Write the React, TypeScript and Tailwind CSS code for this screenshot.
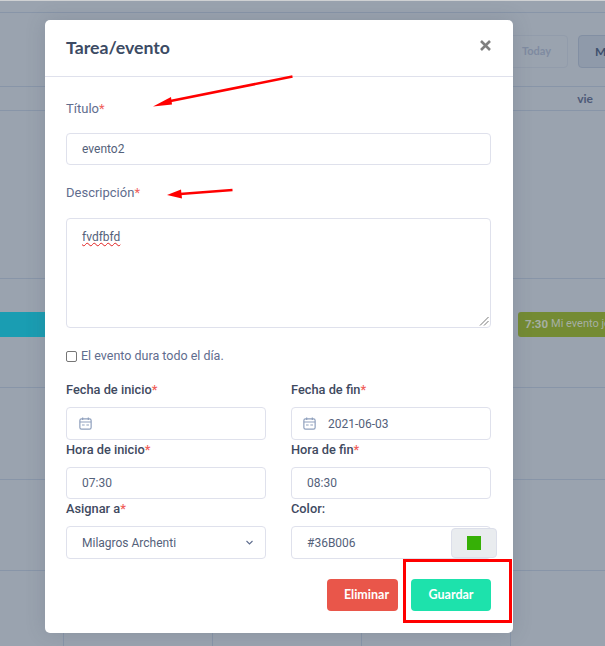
const inputBase = "h-[32px] w-full rounded border border-[#dfe1ec] bg-white flex items-center text-[12px] text-[#54617a]";

function Req({ children }: { children: string }) {
  return (
    <label className="block pt-px h-[18px] text-[12.8px] leading-[18px] font-medium text-[#3f4a5f]">
      {children}
      <span className="text-[#f0605a]">*</span>
    </label>
  );
}

function Calendar() {
  return (
    <svg width="13" height="13" viewBox="0 0 12 12" fill="none" stroke="#8fa0bd" strokeWidth="1.1">
      <rect x="0.8" y="1.8" width="10.4" height="9.4" rx="1.5" />
      <path d="M0.8 4.6h10.4M3.4 0.4v2.4M8.6 0.4v2.4M2.8 7.4h2.4M6.8 7.4h2.4" />
    </svg>
  );
}

function Row({ h, children }: { h: string; children?: React.ReactNode }) {
  return <div className={`${h} border-b border-[#8895a8] relative`}>{children}</div>;
}

function Background() {
  return (
    <div className="h-[646px] w-[605px] overflow-hidden bg-[#9aa3af]">
      <div className="h-px bg-[#cfd1d3]" />
      <Row h="h-[12px]" />
      <div className="h-[74px] border-b border-[#8895a8] flex justify-end pt-[22px] gap-[10px] -mr-[40px]">
        <div className="h-[33px] w-[64px] rounded border border-[#929cab] flex items-center justify-end pr-[16px] text-[11px] font-bold text-[#7f8ba1] font-['Lato',sans-serif]">
          Today
        </div>
        <div className="h-[33px] w-[67px] rounded border border-[#828fa3] bg-[#8f9aaa] pl-[16px] flex items-center text-[12px] font-bold text-[#3e506e] font-['Lato',sans-serif]">
          M
        </div>
      </div>
      <div className="h-[24px] border-b border-[#8895a8] flex justify-end pr-[12px] items-center text-[12px] font-bold text-[#4d5a78] font-['Lato',sans-serif]">
        vie
      </div>
      <Row h="h-[168px]" />
      <div className="h-[109px] border-b border-[#8895a8] pt-[33px] flex">
        <div className="h-[25px] w-[300px] bg-[#1a9db2]" />
        <div className="h-[25px] flex-1 ml-[218px] rounded-l-[3px] bg-[#748b33] pl-[7px] flex items-center gap-[3px] whitespace-nowrap overflow-hidden font-['Roboto',sans-serif] text-[#a6afa4]">
          <span className="text-[11.5px] font-bold">7:30</span>
          <span className="text-[11px]">Mi evento je</span>
        </div>
      </div>
      <Row h="h-[92px]" />
      <Row h="h-[91px]" />
      <div className="flex h-[76px]">
        <div className="w-[64px] border-r border-[#8895a8]" />
        <div className="w-[149px] border-r border-[#8895a8]" />
        <div className="w-[149px] border-r border-[#8895a8]" />
        <div className="w-[149px] border-r border-[#8895a8]" />
      </div>
    </div>
  );
}

function Modal() {
  return (
    <div className="absolute left-[45px] top-[20px] h-[613px] w-[468px] rounded-[5px] bg-white shadow-[0_0_20px_rgba(60,70,90,0.18)] font-['Roboto',sans-serif]">
      <div className="h-[57px] border-b border-[#dfe1ec] pl-[21px] pr-[22px] flex items-center justify-between">
        <h2 className="text-[17.7px] font-bold text-[#3c4b64] font-['Lato',sans-serif]">Tarea/evento</h2>
        <svg width="11" height="11" viewBox="0 0 11 11" className="-mt-[6px]" stroke="#808080" strokeWidth="2.6" fill="none">
          <path d="M1 1l9 9M10 1l-9 9" />
        </svg>
      </div>
      <div className="pl-[21px] pr-[22px]">
        <div className="pt-[23px] h-[56px] text-[13px] leading-[18px] text-[#5f6d8e]">
          Título<span className="text-[#f0605a]">*</span>
        </div>
        <div className={`${inputBase} pl-[15px]`}>evento2</div>
        <div className="pt-[19px] h-[53px] text-[13px] leading-[18px] text-[#5f6d8e]">
          Descripción<span className="text-[#f0605a]">*</span>
        </div>
        <div className="relative h-[110px] rounded border border-[#dfe1ec] pl-[15px] pt-[9px] text-[12px] leading-[18px] text-[#54617a]">
          <span className="underline decoration-wavy decoration-[#e02020] decoration-1 underline-offset-1">fvdfbfd</span>
          <svg width="10" height="10" viewBox="0 0 10 10" className="absolute right-[1px] bottom-[1px]" stroke="#555" strokeWidth="0.8">
            <path d="M1 9.5L9.5 1M5 9.5L9.5 5" />
          </svg>
        </div>
        <div className="mt-[20px] flex items-center gap-[4px] h-[16px] text-[12.5px] text-[#5f6d8e]">
          <span className="h-[11px] w-[11px] rounded-[2px] border border-[#767676] bg-white" />
          El evento dura todo el día.
        </div>
        <div className="mt-[16px] grid grid-cols-[200px_200px] gap-x-[25px]">
          <div className="h-[60px]">
            <Req>Fecha de inicio</Req>
            <div className={`${inputBase} h-[33px] mt-[9px] pl-[12px]`}>
              <Calendar />
            </div>
          </div>
          <div className="h-[60px]">
            <Req>Fecha de fin</Req>
            <div className={`${inputBase} h-[33px] mt-[9px] pl-[11px] gap-[12px]`}>
              <Calendar />
              2021-06-03
            </div>
          </div>
          <div className="h-[59px]">
            <Req>Hora de inicio</Req>
            <div className={`${inputBase} mt-[9px] pl-[15px]`}>07:30</div>
          </div>
          <div className="h-[59px]">
            <Req>Hora de fin</Req>
            <div className={`${inputBase} mt-[9px] pl-[15px]`}>08:30</div>
          </div>
          <div>
            <Req>Asignar a</Req>
            <div className={`${inputBase} h-[33px] mt-[9px] pl-[15px] pr-[12px] justify-between text-[11.7px] text-[#6b7896]`}>
              Milagros Archenti
              <svg width="7" height="5" viewBox="0 0 7 5" fill="none" stroke="#5f6d8e" strokeWidth="1.1">
                <path d="M0.5 1l3 3 3-3" />
              </svg>
            </div>
          </div>
          <div>
            <label className="block pt-px h-[18px] text-[12.8px] leading-[18px] font-medium text-[#3f4a5f]">Color:</label>
            <div className={`${inputBase} relative h-[33px] mt-[9px] pl-[15px]`}>
              #36B006
              <div className="absolute left-[159px] top-[1px] h-[30px] w-[46px] rounded border border-[#dcdfea] bg-[#e9ecef] flex items-center justify-center">
                <div className="h-[14px] w-[14px] bg-[#36b006]" />
              </div>
            </div>
          </div>
        </div>
        <div className="mt-[20px] flex justify-end gap-[13px] font-['Lato',sans-serif] text-[12.5px] font-bold text-white">
          <div className="h-[32px] w-[71px] rounded bg-[#e9564a] pl-[8px] flex items-center justify-center">Eliminar</div>
          <div className="h-[32px] w-[80px] rounded bg-[#1de2ac] flex items-center justify-center">Guardar</div>
        </div>
      </div>
    </div>
  );
}

export default function App() {
  return (
    <div className="relative h-[646px] w-[605px] overflow-hidden">
      <Background />
      <Modal />
      <svg width="605" height="646" className="absolute left-0 top-0 pointer-events-none">
        <path d="M292.5 76.5L168 101.5" stroke="#ff0000" strokeWidth="2.6" fill="none" />
        <path d="M153 106.5L171 97L172 104.5Z" fill="#ff0000" />
        <path d="M232.5 190L180 194" stroke="#ff0000" strokeWidth="2.6" fill="none" />
        <path d="M167 195L181 189.5L182 198.5Z" fill="#ff0000" />
      </svg>
      <div className="absolute left-[403px] top-[559px] h-[64px] w-[109px] border-[3px] border-[#ff0000]" />
    </div>
  );
}
